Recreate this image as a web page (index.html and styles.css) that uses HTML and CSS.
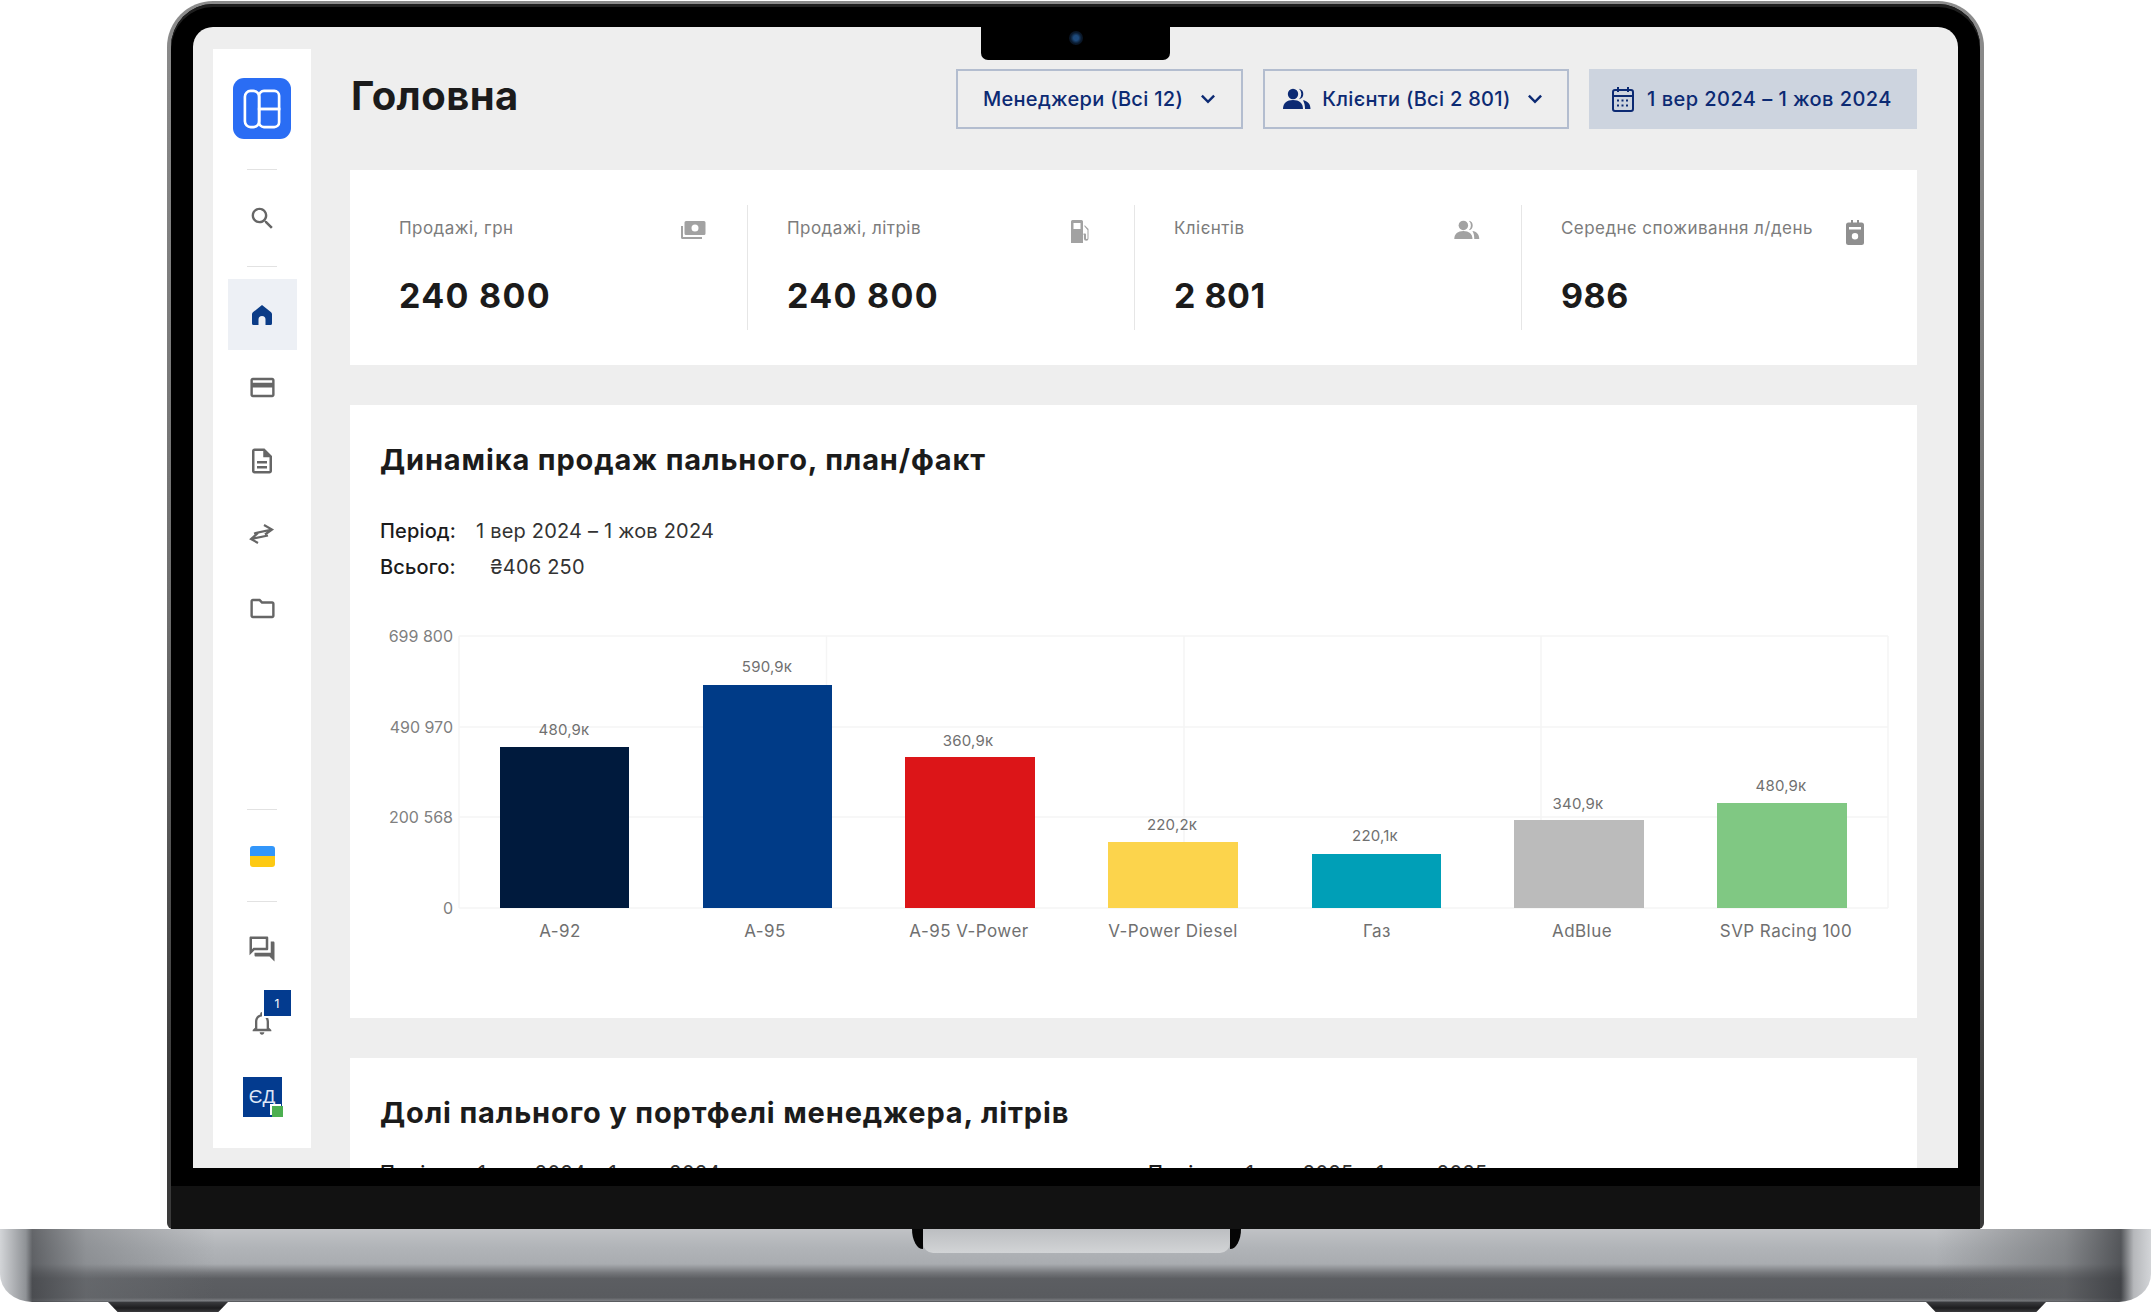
FILE: index.html
```html
<!DOCTYPE html>
<html lang="uk">
<head>
<meta charset="utf-8">
<title>Головна</title>
<link rel="stylesheet" href="styles.css">
</head>
<body>
<div class="laptop">
  <div class="lid">
    <div class="notch"><span class="camera"></span></div>
    <div class="screen">
      <aside class="sidebar">
        <div class="logo">
          <svg width="38" height="40" viewBox="0 0 40 42" fill="none" stroke="#fff" stroke-width="2.800"><rect x="2" y="2" width="15" height="38" rx="6"/><path d="M17 7a5 5 0 0 1 5-5h11a5 5 0 0 1 5 5v14H17z"/><path d="M17 21h21v14a5 5 0 0 1-5 5H22a5 5 0 0 1-5-5z"/></svg>
        </div>
        <div class="rule rule-a"></div>
        <div class="nav-item item-search">
          <svg width="29" height="29" viewBox="0 0 24 24" class="ic"><path d="M15.500 14h-.79l-.28-.27C15.410 12.590 16 11.110 16 9.500 16 5.910 13.090 3 9.500 3S3 5.910 3 9.500 5.910 16 9.500 16c1.610 0 3.090-.59 4.230-1.570l.27.28v.79l5 4.990L20.490 19l-4.990-5zm-6 0C7.010 14 5 11.990 5 9.500S7.010 5 9.500 5 14 7.010 14 9.500 11.990 14 9.500 14z"/></svg>
        </div>
        <div class="rule rule-b"></div>
        <div class="nav-item active">
          <svg width="24" height="24" viewBox="0 0 24 24" class="ic-home"><path d="M12 2 2.900 9.300C2.300 9.800 2 10.500 2 11.200V20.500A1.500 1.500 0 0 0 3.500 22H8.500V16.500a3.500 3.500 0 0 1 7 0V22H20.500A1.500 1.500 0 0 0 22 20.500V11.200C22 10.500 21.700 9.800 21.100 9.300z"/></svg>
        </div>
        <div class="nav-item">
          <svg width="29" height="29" viewBox="0 0 24 24" class="ic"><path d="M20 4H4c-1.110 0-1.990.89-1.990 2L2 18c0 1.110.89 2 2 2h16c1.110 0 2-.89 2-2V6c0-1.110-.89-2-2-2zm0 14H4v-6h16v6zm0-10H4V6h16v2z"/></svg>
        </div>
        <div class="nav-item">
          <svg width="30" height="30" viewBox="0 0 24 24" class="ic"><path d="M8 16h8v2H8zm0-4h8v2H8zm6-10H6c-1.100 0-2 .9-2 2v16c0 1.100.89 2 1.990 2H18c1.100 0 2-.9 2-2V8l-6-6zm4 18H6V4h7v5h5v11z"/></svg>
        </div>
        <div class="nav-item">
          <svg width="26" height="20" viewBox="0 0 26 20" fill="none" stroke="#666" stroke-width="2.200"><path d="M5 9.500 23 5.500M15 1l8 4.500-7 5"/><path d="M19 11.500 2 15M9 9l-7 6 7 4"/></svg>
        </div>
        <div class="nav-item item-folder">
          <svg width="29" height="29" viewBox="0 0 24 24" class="ic"><path d="M20 6h-8l-2-2H4c-1.100 0-1.990.9-1.990 2L2 18c0 1.100.9 2 2 2h16c1.100 0 2-.9 2-2V8c0-1.100-.9-2-2-2zm0 12H4V6h5.170l2 2H20v10z"/></svg>
        </div>
        <div class="spacer"></div>
        <div class="rule rule-c"></div>
        <div class="flag"></div>
        <div class="rule rule-d"></div>
        <div class="nav-item item-chat">
          <svg width="30" height="30" viewBox="0 0 24 24" class="ic"><path d="M15 4v7H5.170l-.59.59-.58.58V4h11m1-2H3c-.55 0-1 .45-1 1v14l4-4h10c.55 0 1-.45 1-1V3c0-.55-.45-1-1-1zm5 4h-2v9H6v2c0 .55.45 1 1 1h11l4 4V7c0-.55-.45-1-1-1z"/></svg>
        </div>
        <div class="nav-item item-bell">
          <svg width="28" height="28" viewBox="0 0 24 24" class="ic"><path d="M12 22c1.100 0 2-.9 2-2h-4c0 1.100.9 2 2 2zm6-6v-5c0-3.070-1.640-5.640-4.500-6.320V4c0-.83-.67-1.500-1.500-1.500s-1.500.67-1.500 1.500v.68C7.630 5.360 6 7.920 6 11v5l-2 2v1h16v-1l-2-2zm-2 1H8v-6c0-2.480 1.510-4.500 4-4.500s4 2.020 4 4.500v6z"/></svg>
          <span class="badge">1</span>
        </div>
        <div class="avatar">ЄД<span class="status"></span></div>
      </aside>

      <main class="main">
        <header class="topbar">
          <h1 class="page-title">Головна</h1>
          <div class="filters">
            <button class="filter filter-managers">Менеджери (Всі 12)
              <svg width="16" height="10" viewBox="0 0 14 9" fill="none" stroke="#0c2a73" stroke-width="2.200"><path d="M1.500 1.500 7 7l5.500-5.500"/></svg>
            </button>
            <button class="filter filter-clients">
              <svg width="28" height="22" viewBox="0 0 28 22" fill="#0c2a73"><circle cx="10" cy="6" r="5.200"/><path d="M0 21c0-6 4-9 10-9s10 3 10 9z"/><path d="M16 .8a5.300 5.300 0 0 1 0 10.400 7 7 0 0 0 0-10.400zM20 12.200c4.500.6 7.500 3.500 7.500 8.800H22c0-3.500-.6-6.400-2-8.800z"/></svg>
              <span>Клієнти (Всі 2 801)</span>
              <svg class="chev" width="16" height="10" viewBox="0 0 14 9" fill="none" stroke="#0c2a73" stroke-width="2.200"><path d="M1.500 1.500 7 7l5.500-5.500"/></svg>
            </button>
            <button class="filter filter-date">
              <svg width="22" height="26" viewBox="0 0 22 26" fill="none" stroke="#0c2a73" stroke-width="2"><rect x="1" y="4" width="20" height="21" rx="2"/><path d="M1 10h20M6 1v5M16 1v5"/><path stroke-dasharray="2 2.500" d="M5 14.500h13M5 19.500h13"/></svg>
              1 вер 2024 – 1 жов 2024
            </button>
          </div>
        </header>

        <section class="card stats">
          <div class="stat">
            <div class="stat-head"><span class="stat-label">Продажі, грн</span>
              <svg class="stat-icon" width="26" height="21" viewBox="0 0 26 21" fill="#a2a2a2"><path fill-rule="evenodd" d="M6 1h18a1.500 1.500 0 0 1 1.500 1.500v11A1.500 1.500 0 0 1 24 15H6a1.500 1.500 0 0 1-1.500-1.500v-11A1.500 1.500 0 0 1 6 1zm9 3.500a3.500 3.500 0 1 0 0 7 3.500 3.500 0 0 0 0-7z"/><path d="M1 6h2v11h19v2H2.500A1.500 1.500 0 0 1 1 17.500z"/></svg>
            </div>
            <div class="stat-value">240 800</div>
          </div>
          <div class="stat">
            <div class="stat-head"><span class="stat-label">Продажі, літрів</span>
              <svg class="stat-icon icon-shift" width="20" height="23" viewBox="0 0 20 23" fill="#a2a2a2"><path fill-rule="evenodd" d="M2.500 0h9A1.500 1.500 0 0 1 13 1.500V23H1V1.500A1.500 1.500 0 0 1 2.500 0zM3.500 3v6h7V3z"/><path d="M14.500 5l4 4v9.500a2.300 2.300 0 0 1-4.600 0V15H13.500v-1.500h1.500c.5 0 1 .5 1 1v4a.8.8 0 0 0 1.500 0V10l-3-3.500z"/></svg>
            </div>
            <div class="stat-value">240 800</div>
          </div>
          <div class="stat">
            <div class="stat-head"><span class="stat-label">Клієнтів</span>
              <svg class="stat-icon" width="26" height="20" viewBox="0 0 28 22" fill="#a2a2a2"><circle cx="10" cy="6" r="5.200"/><path d="M0 21c0-6 4-9 10-9s10 3 10 9z"/><path d="M16 .8a5.300 5.300 0 0 1 0 10.400 7 7 0 0 0 0-10.400zM20 12.200c4.500.6 7.500 3.500 7.500 8.800H22c0-3.500-.6-6.400-2-8.800z"/></svg>
            </div>
            <div class="stat-value value-tight">2 801</div>
          </div>
          <div class="stat">
            <div class="stat-head"><span class="stat-label">Середнє споживання л/день</span>
              <svg class="stat-icon icon-shift" width="18" height="25" viewBox="0 0 18 25" fill="#8f8f8f"><path fill-rule="evenodd" d="M5 0h2v2.500h4V0h2v2.500h2.500A2.500 2.500 0 0 1 18 5v17.500a2.500 2.500 0 0 1-2.500 2.500h-13A2.500 2.500 0 0 1 0 22.500V5a2.500 2.500 0 0 1 2.500-2.500H5zM3 7v2.500h12V7zM9 13a3.200 3.200 0 1 0 0 6.400A3.200 3.200 0 0 0 9 13z"/></svg>
            </div>
            <div class="stat-value value-tight">986</div>
          </div>
        </section>

        <section class="card chart-card">
          <h2 class="card-title">Динаміка продаж пального, план/факт</h2>
          <dl class="meta">
            <div class="meta-row"><dt>Період:</dt><dd>1 вер 2024 – 1 жов 2024</dd></div>
            <div class="meta-row meta-total"><dt>Всього:</dt><dd>₴406 250</dd></div>
          </dl>
          <svg class="chart" width="1540" height="330" viewBox="350 620 1540 330">
            <g class="grid">
              <path d="M459 636H1888M459 727H1888M459 817H1888M459 908H1888"/>
              <path d="M459 636V908M826.500 636V908M1184 636V908M1541 636V908M1888 636V908"/>
            </g>
            <g class="y-label">
              <text x="453" y="642">699 800</text>
              <text x="453" y="733">490 970</text>
              <text x="453" y="823">200 568</text>
              <text x="453" y="914">0</text>
            </g>
            <rect x="500" y="747" width="129" height="161" fill="#001a3d"/>
            <rect x="703" y="685" width="129" height="223" fill="#003b87"/>
            <rect x="905" y="757" width="130" height="151" fill="#dc1518"/>
            <rect x="1108" y="842" width="130" height="66" fill="#fcd44c"/>
            <rect x="1312" y="854" width="129" height="54" fill="#009fb7"/>
            <rect x="1514" y="820" width="130" height="88" fill="#bbbbbb"/>
            <rect x="1717" y="803" width="130" height="105" fill="#80c883"/>
            <g class="bar-label">
              <text x="564" y="735">480,9к</text>
              <text x="767" y="672">590,9к</text>
              <text x="968" y="746">360,9к</text>
              <text x="1172" y="830">220,2к</text>
              <text x="1375" y="841">220,1к</text>
              <text x="1578" y="809">340,9к</text>
              <text x="1781" y="791">480,9к</text>
            </g>
            <g class="x-label">
              <text x="560" y="937">А-92</text>
              <text x="765" y="937">А-95</text>
              <text x="969" y="937">А-95 V-Power</text>
              <text x="1173" y="937">V-Power Diesel</text>
              <text x="1377" y="937">Газ</text>
              <text x="1582" y="937">AdBlue</text>
              <text x="1786" y="937">SVP Racing 100</text>
            </g>
          </svg>
        </section>

        <section class="card share-card">
          <h2 class="card-title">Долі пального у портфелі менеджера, літрів</h2>
          <div class="periods">
            <p class="period"><b>Період:</b> 1 вер 2024 – 1 жов 2024</p>
            <p class="period"><b>Період:</b> 1 вер 2025 – 1 жов 2025</p>
          </div>
        </section>
      </main>
    </div>
    <div class="chin"></div>
  </div>
  <div class="base">
    <div class="thumb"><span class="thumb-l"></span><span class="thumb-mid"></span><span class="thumb-r"></span></div>
  </div>
  <div class="feet"><span class="foot"></span><span class="foot"></span></div>
</div>
</body>
</html>
```
FILE: styles.css
```css
* { box-sizing: border-box; }
html, body { margin: 0; padding: 0; background: #fff; }
body { font-family: "Inter", "Noto Sans", sans-serif; color: #1b1b1b; width: 2151px; height: 1312px; overflow: hidden; }

.laptop { width: 2151px; display: flex; flex-direction: column; align-items: center; padding-top: 1px; }

.lid {
  position: relative;
  width: 1817px;
  height: 1228px;
  display: flex;
  flex-direction: column;
  background: linear-gradient(#000, #000) padding-box, linear-gradient(#8c8c8c, #6e6e6e 50%, #3a3a3a 90%) border-box;
  border: 4px solid transparent;
  border-bottom: 0;
  border-top-width: 3px;
  padding: 23px 22px 0;
  border-radius: 46px 46px 6px 6px;
  box-shadow: inset 0 3px 0 #1f1f1f;
}
.notch {
  position: absolute;
  left: 810px;
  top: 20px;
  width: 189px;
  height: 36px;
  background: #000;
  border-radius: 0 0 7px 7px;
  display: flex;
  justify-content: center;
  padding-top: 7px;
  z-index: 3;
}
.camera { width: 14px; height: 14px; border-radius: 50%; background: radial-gradient(circle, #1e4a7c 0 25%, #0a1a2e 55%, #070a10 100%); }

.screen {
  height: 1141px;
  flex: none;
  background: #eeeeee;
  border-radius: 20px 20px 0 0;
  overflow: hidden;
  display: flex;
  padding-left: 20px;
}
.chin { flex: 1; margin: 18px -22px 0; background: #121212; }

.sidebar {
  width: 98px;
  height: 1099px;
  flex: none;
  margin-top: 22px;
  background: #fff;
  display: flex;
  flex-direction: column;
  align-items: center;
  padding-top: 29px;
}
.logo {
  width: 58px; height: 61px; flex: none;
  background: #2a6df4;
  border-radius: 11px;
  display: flex; align-items: center; justify-content: center;
}
.rule { width: 30px; height: 1px; background: #e2e2e2; flex: none; }
.rule-a { margin-top: 30px; }
.rule-d { margin-top: 34px; }
.nav-item {
  width: 69px; height: 73px; flex: none;
  display: flex; align-items: center; justify-content: center;
  position: relative;
}
.item-search { height: 96px; }
.nav-item.active { background: #edf0f5; height: 71px; margin-top: 12px; margin-bottom: 1px; }
.item-folder { margin-top: 2px; }
.ic { fill: #666; }
.ic-home { fill: #0b3c87; }
.spacer { flex: 1; }
.flag {
  width: 25px; height: 21px; margin-top: 36px; flex: none;
  border-radius: 3px;
  background: linear-gradient(#3296fa 0 50%, #fdc913 50% 100%);
}
.item-chat { height: 60px; margin-top: 17px; }
.item-bell { height: 70px; margin-top: 9px; }
.badge {
  position: absolute;
  left: 34px; top: 2px;
  width: 29px; height: 28px;
  background: #033b8f;
  border: 1px solid #fff;
  border-width: 0 0 2px 2px;
  color: #fff;
  font-size: 12px;
  display: flex; align-items: center; justify-content: center;
}
.avatar {
  position: relative;
  width: 39px; height: 40px; margin-top: 19px; flex: none;
  background: #033b8f;
  color: #dfe8f8;
  font-family: "Liberation Sans", sans-serif;
  font-size: 19px;
  display: flex; align-items: center; justify-content: center;
  margin-bottom: 31px;
}
.status {
  position: absolute; right: -1px; bottom: 0;
  width: 11px; height: 11px;
  background: #4caf50;
  box-shadow: -2px -2px 0 #fff;
}

.main { flex: 1; min-width: 0; padding: 0 41px 0 39px; display: flex; flex-direction: column; }
.topbar { height: 143px; flex: none; display: flex; justify-content: space-between; align-items: flex-start; }
.page-title { margin: 40px 0 0 1px; font-size: 40px; font-weight: 700; letter-spacing: .45px; line-height: 58px; color: #1b1b1b; }
.filters { display: flex; gap: 20px; padding-top: 42px; }
.filter {
  height: 60px;
  font-family: inherit;
  font-size: 20px;
  font-weight: 500;
  letter-spacing: .3px;
  color: #0c2a73;
  background: transparent;
  border: 2px solid #b3bdcf;
  display: flex; align-items: center; justify-content: center;
  padding: 0;
}
.filter-managers { width: 287px; gap: 17px; }
.filter-clients { width: 306px; gap: 11px; padding-right: 6px; }
.filter-clients .chev { margin-left: 5px; }
.filter-date { width: 328px; background: #cdd4df; border: 0; gap: 13px; padding-right: 2px; letter-spacing: .45px; }

.card { background: #fff; flex: none; }
.stats { height: 195px; display: flex; margin-bottom: 40px; padding: 35px 0; }
.stat { width: 387px; padding: 0 41px 0 49px; border-left: 1px solid #e6e6e6; }
.stat:first-child { border-left: 0; width: 397px; }
.stat + .stat { padding-left: 39px; }
.stat-head { display: flex; justify-content: space-between; align-items: flex-start; height: 56px; }
.stat-label { font-size: 17px; letter-spacing: .45px; color: #7c7c7c; padding-top: 13px; line-height: 20px; }
.stat-icon { margin-top: 15px; }
.icon-shift { margin-right: 3px; }
.stat-value { font-size: 34px; font-weight: 700; letter-spacing: 1.3px; line-height: 40px; margin-top: 15px; color: #1b1b1b; }
.value-tight { letter-spacing: .5px; }

.chart-card { height: 613px; margin-bottom: 40px; padding: 0 30px; }
.card-title { margin: 0; font-size: 29px; font-weight: 700; letter-spacing: .85px; line-height: 40px; color: #1b1b1b; padding-top: 35px; height: 75px; }
.meta { margin: 33px 0 0; font-size: 20px; line-height: 36px; }
.meta-row { display: flex; height: 36px; }
.meta dt { font-weight: 500; letter-spacing: .15px; width: 96px; }
.meta dd { margin: 0; color: #333; letter-spacing: .2px; }
.meta-total dd { margin-left: 14px; }
.chart { display: block; margin: 35px 0 0 -30px; }
.grid path { fill: none; stroke: #f5f5f5; stroke-width: 1.500; }
.y-label text { font-size: 16px; fill: #808080; text-anchor: end; }
.bar-label text { font-size: 15px; letter-spacing: .2px; fill: #707070; text-anchor: middle; }
.x-label text { font-size: 17px; letter-spacing: .45px; fill: #707070; text-anchor: middle; }

.share-card { flex: 1; padding: 0 30px; }
.periods { display: flex; margin-top: 28px; }
.period { margin: 0; flex: none; width: 768px; font-size: 20px; letter-spacing: .4px; line-height: 24px; color: #333; }
.period b { font-weight: 500; color: #1b1b1b; margin-right: 14px; }

.base {
  position: relative;
  width: 2151px;
  height: 73px;
  flex: none;
  border-radius: 0 0 32px 32px / 0 0 28px 28px;
  background:
    linear-gradient(90deg, #d3d5d8 0, #8f9296 1.2%, rgba(70,72,76,.75) 1.5%, rgba(110,113,117,.5) 4%, rgba(180,182,186,0) 10%, rgba(180,182,186,0) 90%, rgba(95,97,100,.55) 96%, rgba(60,62,66,.8) 98.6%, #b6b8bb 99.2%, #d3d5d8 100%),
    linear-gradient(#c0c2c5 0, #b1b4b8 25%, #a9acb0 48%, #75777b 60%, #5c5e62 68%, #595b5f 94%, #7a7c80 98%, #4a4c50 100%);
}
.thumb { position: absolute; left: 912px; top: 0; width: 329px; display: flex; }
.thumb-l, .thumb-r { width: 11px; height: 20px; background: #050505; }
.thumb-l { border-bottom-left-radius: 100%; }
.thumb-r { border-bottom-right-radius: 100%; }
.thumb-mid { flex: 1; height: 24px; background: linear-gradient(#bcbec1, #d2d4d6); border-radius: 0 0 10px 10px; }

.feet { width: 2151px; height: 10px; display: flex; justify-content: space-between; padding: 0 105px 0 108px; }
.foot {
  width: 120px; height: 10px;
  background: linear-gradient(#3a3b3e, #1d1d1f 60%, #3a3a3c);
  clip-path: polygon(0 0, 100% 0, 92% 100%, 8% 100%);
}
```
